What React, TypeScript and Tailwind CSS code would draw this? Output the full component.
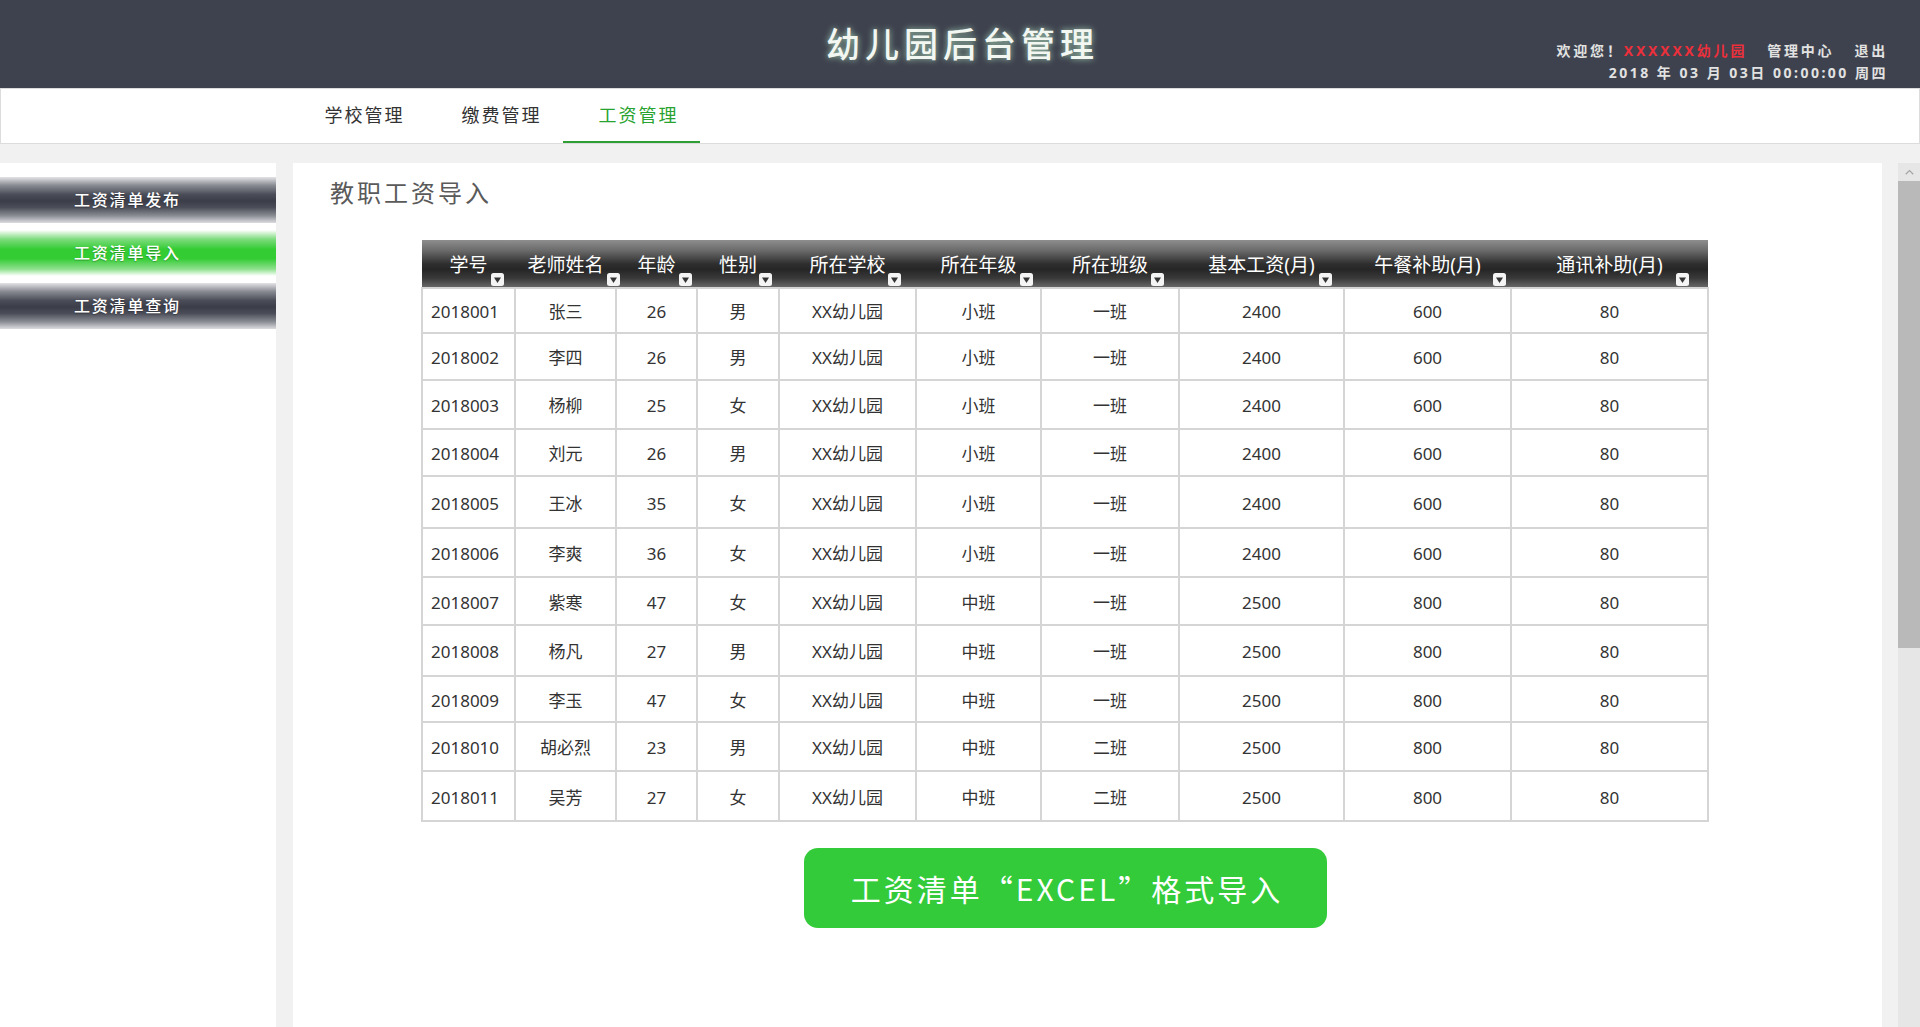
import React from 'react';

const columns = [
  { title: '学号', w: 'w-[93px]', gap: 'ml-[3px]' },
  { title: '老师姓名', w: 'w-[101px]', gap: 'ml-[3px]' },
  { title: '年龄', w: 'w-[81px]', gap: 'ml-[3px]' },
  { title: '性别', w: 'w-[82px]', gap: 'ml-[2px]' },
  { title: '所在学校', w: 'w-[137px]', gap: 'ml-[2px]' },
  { title: '所在年级', w: 'w-[125px]', gap: 'ml-[3px]' },
  { title: '所在班级', w: 'w-[138px]', gap: 'ml-[3px]' },
  { title: '基本工资(月)', w: 'w-[165px]', gap: 'ml-[4px]' },
  { title: '午餐补助(月)', w: 'w-[167px]', gap: 'ml-[12px]' },
  { title: '通讯补助(月)', w: 'w-[197px]', gap: 'ml-[13px]' },
];

const rows = [
  { h: 'h-[45px]', cells: ['2018001', '张三', '26', '男', 'XX幼儿园', '小班', '一班', '2400', '600', '80'] },
  { h: 'h-[47px]', cells: ['2018002', '李四', '26', '男', 'XX幼儿园', '小班', '一班', '2400', '600', '80'] },
  { h: 'h-[49px]', cells: ['2018003', '杨柳', '25', '女', 'XX幼儿园', '小班', '一班', '2400', '600', '80'] },
  { h: 'h-[47px]', cells: ['2018004', '刘元', '26', '男', 'XX幼儿园', '小班', '一班', '2400', '600', '80'] },
  { h: 'h-[52px]', cells: ['2018005', '王冰', '35', '女', 'XX幼儿园', '小班', '一班', '2400', '600', '80'] },
  { h: 'h-[49px]', cells: ['2018006', '李爽', '36', '女', 'XX幼儿园', '小班', '一班', '2400', '600', '80'] },
  { h: 'h-[48px]', cells: ['2018007', '紫寒', '47', '女', 'XX幼儿园', '中班', '一班', '2500', '800', '80'] },
  { h: 'h-[51px]', cells: ['2018008', '杨凡', '27', '男', 'XX幼儿园', '中班', '一班', '2500', '800', '80'] },
  { h: 'h-[46px]', cells: ['2018009', '李玉', '47', '女', 'XX幼儿园', '中班', '一班', '2500', '800', '80'] },
  { h: 'h-[49px]', cells: ['2018010', '胡必烈', '23', '男', 'XX幼儿园', '中班', '二班', '2500', '800', '80'] },
  { h: 'h-[50px]', cells: ['2018011', '吴芳', '27', '女', 'XX幼儿园', '中班', '二班', '2500', '800', '80'] },
];

const navItems = ['学校管理', '缴费管理', '工资管理'];
const sideItems = ['工资清单发布', '工资清单导入', '工资清单查询'];

function SortIcon({ className }: { className: string }) {
  return (
    <svg viewBox="0 0 13 13" className={`absolute bottom-[-11px] left-full h-[13px] w-[13px] ${className}`}>
      <rect x="0" y="0" width="13" height="13" rx="2.5" fill="#f4f4f4" />
      <path d="M3 4.5 L10 4.5 L6.5 10 Z" fill="#333" />
    </svg>
  );
}

export default function App() {
  return (
    <div className="flex h-[1027px] flex-col overflow-hidden bg-[#f1f1f1] font-['Noto_Sans','Noto_Sans_CJK_SC',sans-serif]">
      {/* Top header */}
      <header className="grid h-[88px] shrink-0 grid-cols-[1fr_auto_1fr] bg-[#3e424e]">
        <div />
        <h1 className="self-center pl-[5px] text-[34px] font-medium leading-none tracking-[5px] text-[#f2f7f2] [text-shadow:0_0_6px_rgba(200,255,215,0.75)]">
          幼儿园后台管理
        </h1>
        <div className="flex flex-col items-end pr-[32px] pt-[40px] text-[14px] font-bold leading-[22px] text-[#e2e2e2]">
          <div className="flex gap-[20px] tracking-[2.8px]">
            <span>
              欢迎您！<span className="text-[#ec2f3b]">XXXXXX幼儿园</span>
            </span>
            <span>管理中心</span>
            <span>退出</span>
          </div>
          <div className="tracking-[2.5px]">2018 年 03 月 03日 00:00:00 周四</div>
        </div>
      </header>

      {/* Nav bar */}
      <nav className="flex h-[56px] shrink-0 border border-[#dcdcdc] bg-white pl-[288px]">
        {navItems.map((item, i) => (
          <div
            key={item}
            className={`flex w-[137px] items-center justify-center pl-[14px] text-[18px] tracking-[2px] ${
              i === 2 ? 'border-b-2 border-[#2e9e35] text-[#29a32f]' : 'border-b-2 border-transparent text-[#333]'
            }`}
          >
            {item}
          </div>
        ))}
      </nav>

      <div className="flex min-h-0 flex-1 pt-[19px]">
        {/* Sidebar */}
        <aside className="flex w-[276px] shrink-0 flex-col gap-[7px] bg-white pt-[14px]">
          {sideItems.map((item, i) => (
            <div
              key={item}
              className={`flex h-[46px] items-center pl-[74px] text-[16px] font-medium tracking-[1.8px] text-white [text-shadow:0_1px_1px_rgba(0,0,0,0.25)] ${
                i === 1
                  ? 'bg-[linear-gradient(to_bottom,#ffffff_0%,#7ddc7d_20%,#33cc33_42%,#33cc33_62%,#8ee08e_85%,#ffffff_100%)]'
                  : 'bg-[linear-gradient(to_bottom,#e4e4e7_0%,#8a8c94_18%,#4a4c57_38%,#3b3d48_52%,#4a4c57_66%,#8a8c94_84%,#dcdce0_100%)]'
              }`}
            >
              {item}
            </div>
          ))}
        </aside>

        {/* Main panel */}
        <main className="ml-[17px] flex w-[1589px] shrink-0 flex-col bg-white pl-[37px]">
          <h2 className="mt-[18px] text-[24px] leading-none tracking-[3px] text-[#5a5a5a]">教职工资导入</h2>

          <div className="ml-[92px] mt-[35px] flex w-[1286px] flex-col items-center">
            <table className="w-[1286px] table-fixed border-collapse">
              <colgroup>
                {columns.map((c) => (
                  <col key={c.title} className={c.w} />
                ))}
              </colgroup>
              <thead>
                <tr className="h-[48px] bg-[linear-gradient(to_bottom,#8e8e8e_0%,#6a6a6a_22%,#2e2e2e_50%,#262626_62%,#3a3a3a_80%,#6c6c6c_100%)]">
                  {columns.map((c) => (
                    <th key={c.title} className="p-0 pt-[4px] text-center text-[19px] font-normal text-white">
                      <span className="relative inline-block leading-none">
                        {c.title}
                        <SortIcon className={c.gap} />
                      </span>
                    </th>
                  ))}
                </tr>
              </thead>
              <tbody>
                {rows.map((r) => (
                  <tr key={r.cells[0]} className={r.h}>
                    {r.cells.map((cell, j) => (
                      <td
                        key={j}
                        className={`border-2 border-[#d5d5d5] p-0 pt-[3px] text-[17px] text-[#333] ${j === 0 ? 'pl-[8px] text-left' : 'text-center'}`}
                      >
                        {cell}
                      </td>
                    ))}
                  </tr>
                ))}
              </tbody>
            </table>

            <button className="mt-[26px] flex h-[80px] w-[523px] items-center justify-center rounded-[14px] bg-[#33cb3a] pl-[4px] font-['Noto_Sans_CJK_SC',sans-serif] text-[30px] tracking-[3px] text-white">
              工资清单“EXCEL”格式导入
            </button>
          </div>
        </main>

        {/* Scrollbar */}
        <div className="ml-[16px] flex w-[22px] shrink-0 flex-col bg-[#e6e6e6]">
          <div className="flex h-[18px] items-center justify-center">
            <svg viewBox="0 0 12 8" className="h-[6px] w-[11px]">
              <path d="M1 7 L6 2 L11 7" fill="none" stroke="#a3a3a3" strokeWidth="1.5" />
            </svg>
          </div>
          <div className="h-[467px] bg-[#b9b9b9]" />
        </div>
      </div>
    </div>
  );
}
